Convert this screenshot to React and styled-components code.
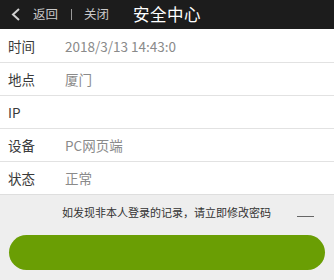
import styled, { createGlobalStyle } from "styled-components";

const GlobalStyle = createGlobalStyle`
  html, body {
    margin: 0;
    padding: 0;
    background: #eeeeee;
  }
  body {
    font-family: "Noto Sans CJK SC", "Liberation Sans", sans-serif;
  }
`;

const Page = styled.div`
  width: 334px;
  height: 280px;
  background: #eeeeee;
  overflow: hidden;
`;

const Header = styled.header`
  height: 29px;
  background: #1c1c1c;
  display: flex;
  align-items: center;
  padding-left: 11px;
  color: #fff;
`;

const NavLink = styled.span`
  display: flex;
  align-items: center;
  font-size: 12.5px;
  color: #c9c9c9;
  line-height: 1;
`;

const Divider = styled.span`
  width: 1px;
  height: 11px;
  background: #9a9a9a;
  margin: 0 12px 0 13px;
`;

const Title = styled.h1`
  margin: 0 0 0 24px;
  font-size: 16.5px;
  font-weight: 400;
  color: #ffffff;
  letter-spacing: 0.5px;
  line-height: 1;
`;

const List = styled.div`
  background: #ffffff;
`;

const Row = styled.div`
  height: 33px;
  display: flex;
  align-items: center;
  padding-left: 8px;
  border-top: ${(p) => (p.$first ? "none" : "1px solid #e2e2e2")};
  box-sizing: border-box;
  font-size: 13.5px;
`;

const Label = styled.span`
  width: 57px;
  color: #3a3a3a;
`;

const Value = styled.span`
  color: #8a8a8a;
`;

const Footer = styled.div`
  border-top: 1px solid #dedede;
  padding-top: 9px;
  display: flex;
  flex-direction: column;
`;

const Notice = styled.p`
  margin: 0;
  font-size: 11px;
  color: #333333;
  display: flex;
  align-items: center;
  gap: 26px;
  padding-left: 62px;
`;

const Dash = styled.span`
  width: 17px;
  height: 1px;
  background: #666;
  margin-top: 9px;
`;

const Button = styled.button`
  margin: 15px 0 0 9px;
  width: 316px;
  height: 35px;
  border: none;
  border-radius: 18px;
  background: #6a9e04;
`;

const rows = [
  ["时间", "2018/3/13 14:43:0"],
  ["地点", "厦门"],
  ["IP", ""],
  ["设备", "PC网页端"],
  ["状态", "正常"],
];

export default function App() {
  return (
    <Page>
      <GlobalStyle />
      <Header>
        <NavLink>
          <svg width="10" height="13" viewBox="0 0 10 13" style={{ marginRight: 12 }}>
            <path d="M8 1 L2 6.5 L8 12" fill="none" stroke="#d0d0d0" strokeWidth="2" />
          </svg>
          返回
        </NavLink>
        <Divider />
        <NavLink>关闭</NavLink>
        <Title>安全中心</Title>
      </Header>
      <List>
        {rows.map(([k, v], i) => (
          <Row key={k} $first={i === 0}>
            <Label>{k}</Label>
            <Value>{v}</Value>
          </Row>
        ))}
      </List>
      <Footer>
        <Notice>
          如发现非本人登录的记录，请立即修改密码
          <Dash />
        </Notice>
        <Button />
      </Footer>
    </Page>
  );
}
